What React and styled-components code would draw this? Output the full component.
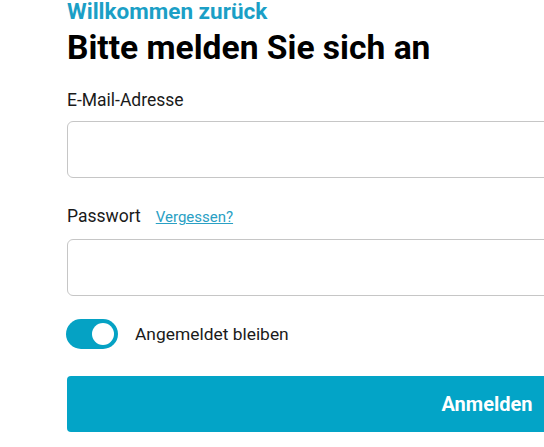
import React, { useState } from "react";
import styled, { createGlobalStyle } from "styled-components";

const GlobalStyle = createGlobalStyle`
  html, body {
    margin: 0;
    padding: 0;
    background: #ffffff;
    overflow: hidden;
  }
  body {
    font-family: Roboto, "Liberation Sans", sans-serif;
    color: #111111;
  }
`;

const Page = styled.div`
  padding: 0 0 0 67px;
`;

const Form = styled.form`
  width: 840px;
  display: flex;
  flex-direction: column;
`;

const Eyebrow = styled.div`
  font-size: 22.5px;
  font-weight: 700;
  color: #1b9fc6;
  line-height: 23px;
`;

const Heading = styled.h1`
  margin: 5px 0 0;
  font-size: 33.6px;
  font-weight: 700;
  color: #000000;
  line-height: 40px;
`;

const Field = styled.div`
  display: flex;
  flex-direction: column;
  margin-top: ${({ $top }) => $top}px;
`;

const LabelRow = styled.div`
  display: flex;
  align-items: baseline;
  gap: 15px;
  height: 20px;
  margin-bottom: ${({ $gap }) => $gap}px;
`;

const Label = styled.label`
  font-size: 17.5px;
  line-height: 20px;
  color: #1a1a1a;
`;

const ForgotLink = styled.a`
  font-size: 15px;
  line-height: 20px;
  color: #2aa0c4;
  text-decoration: underline;
  cursor: pointer;
`;

const Input = styled.input`
  box-sizing: border-box;
  height: 57px;
  width: 100%;
  border: 1px solid #c6c6c6;
  border-radius: 6px;
  padding: 0 16px;
  font-size: 17px;
  font-family: inherit;
  outline: none;
`;

const ToggleRow = styled.label`
  display: flex;
  align-items: center;
  gap: 17px;
  margin: 23px 0 0 -1px;
  font-size: 17.4px;
  line-height: 20px;
  color: #1a1a1a;
  cursor: pointer;
`;

const Track = styled.span`
  position: relative;
  width: 52px;
  height: 30px;
  border-radius: 15px;
  background: ${({ $on }) => ($on ? "#05a2c4" : "#c6c6c6")};
  flex-shrink: 0;
`;

const Knob = styled.span`
  position: absolute;
  top: 4px;
  left: ${({ $on }) => ($on ? "26px" : "4px")};
  width: 22px;
  height: 22px;
  border-radius: 50%;
  background: #ffffff;
`;

const SubmitButton = styled.button`
  margin-top: 27px;
  height: 56px;
  width: 100%;
  border: none;
  border-radius: 4px;
  background: #03a4c7;
  color: #ffffff;
  font-family: inherit;
  font-size: 20px;
  font-weight: 700;
  cursor: pointer;
`;

export default function App() {
  const [stay, setStay] = useState(true);

  return (
    <Page>
      <GlobalStyle />
      <Form onSubmit={(e) => e.preventDefault()}>
        <Eyebrow>Willkommen zurück</Eyebrow>
        <Heading>Bitte melden Sie sich an</Heading>
        <Field $top={22}>
          <LabelRow $gap={11}>
            <Label htmlFor="email">E-Mail-Adresse</Label>
          </LabelRow>
          <Input id="email" type="email" />
        </Field>
        <Field $top={28}>
          <LabelRow $gap={13}>
            <Label htmlFor="pw">Passwort</Label>
            <ForgotLink>Vergessen?</ForgotLink>
          </LabelRow>
          <Input id="pw" type="password" />
        </Field>
        <ToggleRow onClick={() => setStay(!stay)}>
          <Track $on={stay}>
            <Knob $on={stay} />
          </Track>
          Angemeldet bleiben
        </ToggleRow>
        <SubmitButton type="submit">Anmelden</SubmitButton>
      </Form>
    </Page>
  );
}
